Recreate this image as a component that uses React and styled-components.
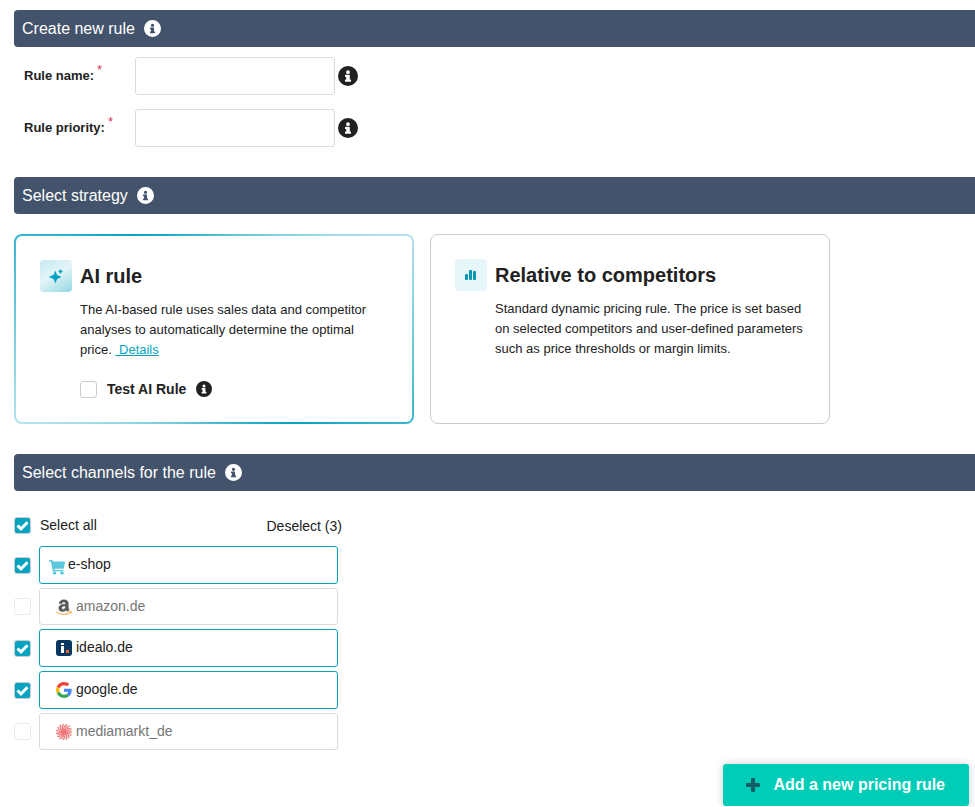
import React, { useState } from "react";
import styled, { createGlobalStyle } from "styled-components";

const GlobalStyle = createGlobalStyle`
  *, *::before, *::after { box-sizing: border-box; }
  body {
    margin: 0;
    background: #fff;
    color: #212121;
    font-family: "Liberation Sans", Arial, sans-serif;
    font-size: 14px;
  }
`;

const Page = styled.main`
  display: flex;
  flex-direction: column;
  padding: 10px 0 0 14px;
`;

const SectionBar = styled.h2`
  display: flex;
  align-items: center;
  gap: 9px;
  height: 37px;
  margin: 0;
  padding: 0 8px;
  border-radius: 4px 0 0 4px;
  background: #43536b;
  color: #fff;
  font-size: 16px;
  font-weight: 400;
`;

const Fields = styled.div`
  display: flex;
  flex-direction: column;
  gap: 14px;
  padding: 10px 0 30px 10px;
`;

const Field = styled.div`
  display: flex;
  align-items: center;
  height: 38px;
`;

const FieldLabel = styled.label`
  width: 111px;
  padding-bottom: 2px;
  font-size: 13px;
  font-weight: 700;
`;

const Required = styled.sup`
  margin-left: 3px;
  color: #dc3558;
  font-size: 13px;
  font-weight: 400;
  line-height: 0;
`;

const TextInput = styled.input`
  width: 200px;
  height: 38px;
  margin-right: 3px;
  padding: 0 10px;
  border: 1px solid #dcdcdc;
  border-radius: 3px;
  background: #fff;
  font: inherit;
`;

const Strategies = styled.div`
  display: flex;
  flex-wrap: wrap;
  gap: 16px;
  padding: 20px 14px 30px 0;
`;

const Card = styled.article`
  display: flex;
  gap: 8px;
  width: 400px;
  min-height: 190px;
  padding: 24px;
  border-radius: 8px;
  border: ${(p) => (p.$active ? "2px solid transparent" : "1px solid #ccc")};
  background: ${(p) =>
    p.$active
      ? `linear-gradient(#fff, #fff) padding-box,
         conic-gradient(from 318deg, #05a3c2, #b4e3ec 106deg, #05a3c2 180deg, #b4e3ec 286deg, #05a3c2) border-box`
      : "#fff"};
`;

const CardIcon = styled.span`
  display: flex;
  flex: none;
  align-items: center;
  justify-content: center;
  width: 32px;
  height: 32px;
  border-radius: 4px;
  background: ${(p) =>
    p.$active ? "linear-gradient(150deg, #c4e9f0, #e4f5f8 45%, #94d7e4)" : "#e6f6f9"};
`;

const CardBody = styled.div`
  flex: 1;
  min-width: 0;
`;

const CardTitle = styled.h3`
  margin: 0 0 8px;
  font-size: 20px;
  line-height: 32px;
`;

const CardText = styled.p`
  margin: 0;
  font-size: 13px;
  line-height: 20px;
`;

const DetailsLink = styled.a`
  color: #05a3c2;
`;

const TestRow = styled.div`
  display: flex;
  align-items: center;
  gap: 10px;
  margin-top: 20px;
  font-size: 14px;
  font-weight: 700;
  line-height: 18px;
`;

const CheckWrap = styled.span`
  display: grid;
  flex: none;
  width: 17px;
  height: 17px;
  opacity: ${(p) => (p.$muted ? 0.4 : 1)};

  > * { grid-area: 1 / 1; }
  > svg { place-self: center; pointer-events: none; visibility: hidden; }
  > input:checked + svg { visibility: visible; }
`;

const CheckInput = styled.input`
  appearance: none;
  width: 17px;
  height: 17px;
  margin: 0;
  border: 1px solid #ccc;
  border-radius: 3px;
  background: #fff;

  &:checked { background: #05a3c2; }
`;

const Channels = styled.div`
  display: flex;
  flex-direction: column;
  width: 328px;
  padding-top: 22px;
`;

const SelectAll = styled.div`
  display: flex;
  align-items: center;
  gap: 9px;
  height: 25px;
  margin-bottom: 8px;
`;

const SelectAllLabel = styled.label`
  padding-bottom: 2px;
`;

const PlainButton = styled.button`
  margin-left: auto;
  padding: 0;
  border: 0;
  background: none;
  color: inherit;
  font: inherit;
`;

const ChannelList = styled.ul`
  display: flex;
  flex-direction: column;
  gap: 4px;
  margin: 0;
  padding: 0;
  list-style: none;
`;

const ChannelItem = styled.li`
  display: flex;
  align-items: center;
  gap: 8px;
`;

const ChannelBox = styled.label`
  display: flex;
  align-items: center;
  gap: ${(p) => (p.$wide ? 3 : 4)}px;
  width: 299px;
  height: ${(p) => (p.$on ? 38 : 37)}px;
  padding-left: ${(p) => (p.$wide ? 9 : 16)}px;
  border: 1px solid ${(p) => (p.$on ? "#05a3c2" : "#dcdcdc")};
  border-radius: 3px;
  color: ${(p) => (p.$on ? "#212121" : "#757575")};

  svg {
    flex: none;
    margin-top: ${(p) => (p.$wide ? 4 : 0)}px;
    opacity: ${(p) => (p.$on ? 1 : 0.75)};
  }
`;

const ChannelName = styled.span`
  padding-bottom: 2px;
`;

const Footer = styled.footer`
  display: flex;
  justify-content: flex-end;
  padding: 14px 6px 0 0;
`;

const AddButton = styled.button`
  display: flex;
  align-items: center;
  gap: 12px;
  height: 42px;
  padding: 0 24px 0 22px;
  border: 0;
  border-radius: 3px;
  background: #00cdb7;
  box-shadow: 0 0 8px rgba(0, 0, 0, 0.2);
  color: #fff;
  font: 700 16px "Liberation Sans", Arial, sans-serif;
`;

const InfoIcon = ({ size }) => (
  <svg width={size} height={size} viewBox="0 0 20 20" aria-hidden="true">
    <path
      fill="currentColor"
      fillRule="evenodd"
      d="M10 0a10 10 0 1 1 0 20a10 10 0 1 1 0-20ZM10 4.300a1.900 1.900 0 1 0 0 3.800a1.900 1.900 0 1 0 0-3.800ZM7.500 8.800a.5.500 0 0 0-.5.500v1.200a.5.500 0 0 0 .5.500h.7v2.500h-.7a.5.500 0 0 0-.5.500v1.200a.5.500 0 0 0 .5.500h5a.5.500 0 0 0 .5-.5V14a.5.500 0 0 0-.5-.5h-.7V9.300a.5.500 0 0 0-.5-.5Z"
    />
  </svg>
);

const CheckIcon = () => (
  <svg width="13" height="13" viewBox="0 0 13 13" aria-hidden="true">
    <path d="M1.500 6.500L5 9.800L11.500 3.300" fill="none" stroke="#fff" strokeWidth="3" />
  </svg>
);

const PlusIcon = () => (
  <svg width="16" height="16" viewBox="0 0 16 16" aria-hidden="true">
    <path
      fill="#145f66"
      d="M7 1h2a1 1 0 0 1 1 1v4h4a1 1 0 0 1 1 1v2a1 1 0 0 1-1 1h-4v4a1 1 0 0 1-1 1H7a1 1 0 0 1-1-1v-4H2a1 1 0 0 1-1-1V7a1 1 0 0 1 1-1h4V2a1 1 0 0 1 1-1Z"
    />
  </svg>
);

const CartIcon = () => (
  <svg width="16" height="15" viewBox="0 0 16 15" fill="#5cc8df" aria-hidden="true">
    <path d="M.5 0H3c.4 0 .6.200.7.600l.2.900H15.300c.5 0 .8.400.7.900l-1.300 5.800c-.1.400-.4.600-.8.600H5.500l.2 1.200h8c.5 0 .8.400.7.800l-.1.500H4.400c-.4 0-.6-.2-.7-.6L1.900 1.600H.5C.2 1.600 0 1.400 0 1.100V.5C0 .2.200 0 .5 0Z" />
    <circle cx="5.500" cy="13" r="1.800" />
    <circle cx="13" cy="13" r="1.800" />
  </svg>
);

const SparkIcon = () => (
  <svg width="16" height="16" viewBox="0 0 16 16" fill="#05a3c2" aria-hidden="true">
    <path d="M7 3 Q8 3 8.400 5.200 Q8.800 7.300 10.800 7.700 Q13 8.100 13 9 Q13 9.900 10.800 10.300 Q8.800 10.700 8.400 12.800 Q8 15 7 15 Q6.400 12.500 5.600 11.200 Q4.800 10.400 1.500 9.500 Q1 9 1.500 8.500 Q4.800 7.600 5.600 6.800 Q6.400 5.500 7 3Z" />
    <path d="M12.500 1 Q13.100 2.900 15 3.500 Q13.100 4.100 12.500 6 Q11.900 4.100 10 3.500 Q11.900 2.900 12.500 1Z" />
  </svg>
);

const BarsIcon = () => (
  <svg width="16" height="16" viewBox="0 0 16 16" fill="#0797b3" aria-hidden="true">
    <rect x="2" y="7" width="3" height="6" rx="1" />
    <rect x="6" y="3" width="3" height="10" rx="1" />
    <rect x="10" y="4" width="3" height="9" rx="1" />
  </svg>
);

const AmazonIcon = () => (
  <svg width="16" height="16" viewBox="0 0 16 16" aria-hidden="true">
    <path
      fill="#222"
      stroke="#222"
      strokeWidth=".5"
      fillRule="evenodd"
      d="M3.200 4.500C3.500 2 5.300.8 7.900.8c3 0 4.400 1.300 4.400 3.900v4c0 .9.300 1.400 1 2.200l-1.900 1.700c-.7-.5-1-.9-1.400-1.500-1 1.100-2 1.500-3.500 1.500-2.200 0-3.700-1.200-3.700-3.300 0-2.800 2.200-4 6.700-4.100v-.5c0-1.100-.6-1.600-1.700-1.600-1 0-1.700.5-1.900 1.600ZM9.500 7C7 7 5.700 7.600 5.700 9c0 .9.500 1.400 1.400 1.400 1.600 0 2.400-1.200 2.400-2.900Z"
    />
    <path fill="none" stroke="#f7a82d" strokeWidth="1.300" d="M.5 13.200c4.200 2.500 9.400 2.800 13.600.4M13 12.700l2.300-.1-.5 2" />
  </svg>
);

const IdealoIcon = () => (
  <svg width="16" height="16" viewBox="0 0 16 16" aria-hidden="true">
    <rect width="16" height="16" rx="3" fill="#0a3761" />
    <path fill="#fff" d="M5 3h3v2H5zM5 6h3v7H5z" />
    <rect x="10" y="10" width="3" height="3" fill="#e9682a" />
  </svg>
);

const GoogleIcon = () => (
  <svg width="16" height="16" viewBox="0 0 48 48" aria-hidden="true">
    <path fill="#EA4335" d="M24 9.500c3.540 0 6.710 1.220 9.210 3.600l6.850-6.850C35.900 2.380 30.470 0 24 0 14.620 0 6.510 5.380 2.560 13.220l7.980 6.190C12.430 13.720 17.740 9.500 24 9.500z" />
    <path fill="#4285F4" d="M46.980 24.550c0-1.570-.15-3.090-.38-4.550H24v9.020h12.940c-.58 2.960-2.260 5.480-4.780 7.180l7.730 6c4.510-4.180 7.090-10.360 7.090-17.650z" />
    <path fill="#FBBC05" d="M10.530 28.590c-.48-1.450-.76-2.990-.76-4.590s.27-3.140.76-4.590l-7.980-6.190C.92 16.460 0 20.120 0 24s.92 7.540 2.560 10.780l7.970-6.190z" />
    <path fill="#34A853" d="M24 48c6.480 0 11.930-2.130 15.890-5.810l-7.730-6c-2.150 1.450-4.920 2.300-8.160 2.300-6.260 0-11.570-4.220-13.470-9.910l-7.980 6.190C6.510 42.620 14.620 48 24 48z" />
  </svg>
);

const arms = Array.from({ length: 15 }, (_, i) => i * 24);

const MediaMarktIcon = () => (
  <svg width="16" height="16" viewBox="-8 -8 16 16" aria-hidden="true">
    <circle r="1.800" fill="#e63b3f" />
    {arms.map((angle) => (
      <path
        key={angle}
        d="M1 0Q4-3.200 8 .6"
        fill="none"
        stroke="#ec4a4e"
        strokeWidth="1.300"
        transform={`rotate(${angle})`}
      />
    ))}
  </svg>
);

const Checkbox = ({ muted, ...inputProps }) => (
  <CheckWrap $muted={muted}>
    <CheckInput type="checkbox" {...inputProps} />
    <CheckIcon />
  </CheckWrap>
);

const initialChannels = [
  { id: "eshop", name: "e-shop", on: true, wide: true, icon: <CartIcon /> },
  { id: "amazon", name: "amazon.de", on: false, icon: <AmazonIcon /> },
  { id: "idealo", name: "idealo.de", on: true, icon: <IdealoIcon /> },
  { id: "google", name: "google.de", on: true, icon: <GoogleIcon /> },
  { id: "mediamarkt", name: "mediamarkt_de", on: false, icon: <MediaMarktIcon /> },
];

export default function App() {
  const [channels, setChannels] = useState(initialChannels);
  const [allChecked, setAllChecked] = useState(true);
  const selected = channels.filter((c) => c.on).length;

  const setEvery = (on) => {
    setAllChecked(on);
    setChannels(channels.map((c) => ({ ...c, on })));
  };
  const toggle = (id) =>
    setChannels(channels.map((c) => (c.id === id ? { ...c, on: !c.on } : c)));

  return (
    <Page>
      <GlobalStyle />
      <SectionBar>
        Create new rule <InfoIcon size={17} />
      </SectionBar>
      <Fields>
        <Field>
          <FieldLabel htmlFor="rule-name">
            Rule name:<Required>*</Required>
          </FieldLabel>
          <TextInput id="rule-name" />
          <InfoIcon size={20} />
        </Field>
        <Field>
          <FieldLabel htmlFor="rule-priority">
            Rule priority:<Required>*</Required>
          </FieldLabel>
          <TextInput id="rule-priority" />
          <InfoIcon size={20} />
        </Field>
      </Fields>

      <SectionBar>
        Select strategy <InfoIcon size={17} />
      </SectionBar>
      <Strategies>
        <Card $active>
          <CardIcon $active>
            <SparkIcon />
          </CardIcon>
          <CardBody>
            <CardTitle>AI rule</CardTitle>
            <CardText>
              The AI-based rule uses sales data and competitor analyses to automatically
              determine the optimal price. <DetailsLink href="#details">{"\u00a0Details"}</DetailsLink>
            </CardText>
            <TestRow>
              <Checkbox id="test-ai" />
              <label htmlFor="test-ai">Test AI Rule</label>
              <InfoIcon size={16} />
            </TestRow>
          </CardBody>
        </Card>
        <Card>
          <CardIcon>
            <BarsIcon />
          </CardIcon>
          <CardBody>
            <CardTitle>Relative to competitors</CardTitle>
            <CardText>
              Standard dynamic pricing rule. The price is set based on selected competitors
              and user-defined parameters such as price thresholds or margin limits.
            </CardText>
          </CardBody>
        </Card>
      </Strategies>

      <SectionBar>
        Select channels for the rule <InfoIcon size={17} />
      </SectionBar>
      <Channels>
        <SelectAll>
          <Checkbox
            id="select-all"
            checked={allChecked}
            onChange={(e) => setEvery(e.target.checked)}
          />
          <SelectAllLabel htmlFor="select-all">Select all</SelectAllLabel>
          <PlainButton type="button" onClick={() => setEvery(false)}>
            Deselect ({selected})
          </PlainButton>
        </SelectAll>
        <ChannelList>
          {channels.map((c) => (
            <ChannelItem key={c.id}>
              <Checkbox id={c.id} checked={c.on} muted={!c.on} onChange={() => toggle(c.id)} />
              <ChannelBox htmlFor={c.id} $on={c.on} $wide={c.wide}>
                {c.icon}
                <ChannelName>{c.name}</ChannelName>
              </ChannelBox>
            </ChannelItem>
          ))}
        </ChannelList>
      </Channels>

      <Footer>
        <AddButton type="button">
          <PlusIcon />
          Add a new pricing rule
        </AddButton>
      </Footer>
    </Page>
  );
}
